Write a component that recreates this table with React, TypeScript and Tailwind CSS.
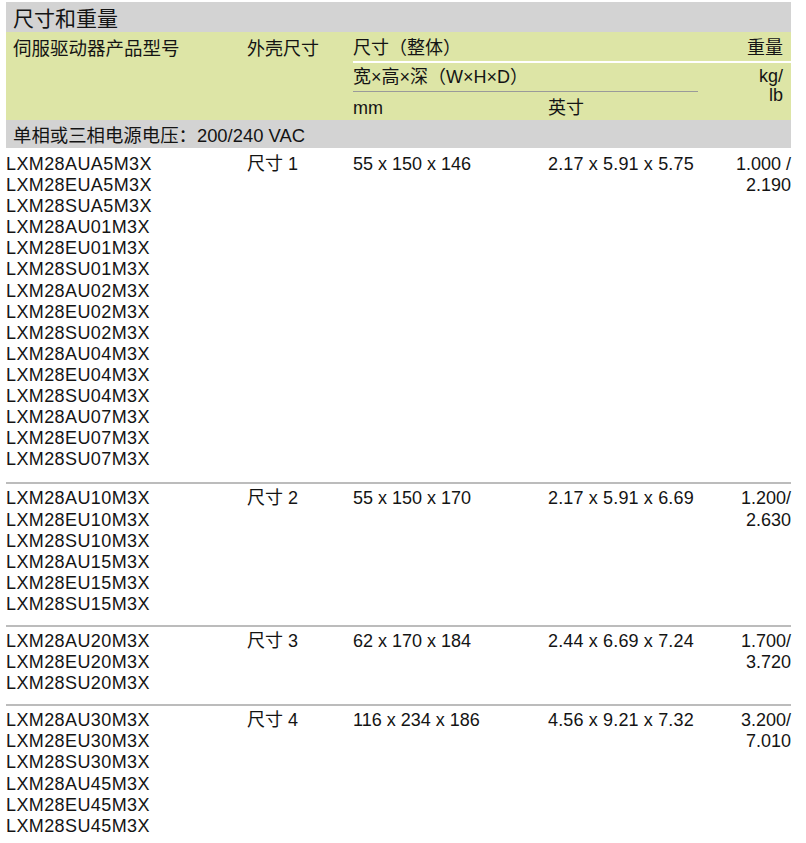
import React from "react";

type Group = {
  models: string[];
  size: string;
  mm: string;
  inch: string;
  w1: string;
  w2: string;
  pt: string;
  pb: string;
};

const groups: Group[] = [
  {
    models: [
      "LXM28AUA5M3X",
      "LXM28EUA5M3X",
      "LXM28SUA5M3X",
      "LXM28AU01M3X",
      "LXM28EU01M3X",
      "LXM28SU01M3X",
      "LXM28AU02M3X",
      "LXM28EU02M3X",
      "LXM28SU02M3X",
      "LXM28AU04M3X",
      "LXM28EU04M3X",
      "LXM28SU04M3X",
      "LXM28AU07M3X",
      "LXM28EU07M3X",
      "LXM28SU07M3X",
    ],
    size: "1",
    mm: "55 x 150 x 146",
    inch: "2.17 x 5.91 x 5.75",
    w1: "1.000 /",
    w2: "2.190",
    pt: "pt-[6px]",
    pb: "pb-[12px]",
  },
  {
    models: [
      "LXM28AU10M3X",
      "LXM28EU10M3X",
      "LXM28SU10M3X",
      "LXM28AU15M3X",
      "LXM28EU15M3X",
      "LXM28SU15M3X",
    ],
    size: "2",
    mm: "55 x 150 x 170",
    inch: "2.17 x 5.91 x 6.69",
    w1: "1.200/",
    w2: "2.630",
    pt: "pt-[4px]",
    pb: "pb-[10px]",
  },
  {
    models: ["LXM28AU20M3X", "LXM28EU20M3X", "LXM28SU20M3X"],
    size: "3",
    mm: "62 x 170 x 184",
    inch: "2.44 x 6.69 x 7.24",
    w1: "1.700/",
    w2: "3.720",
    pt: "pt-[4px]",
    pb: "pb-[10px]",
  },
  {
    models: [
      "LXM28AU30M3X",
      "LXM28EU30M3X",
      "LXM28SU30M3X",
      "LXM28AU45M3X",
      "LXM28EU45M3X",
      "LXM28SU45M3X",
    ],
    size: "4",
    mm: "116 x 234 x 186",
    inch: "4.56 x 9.21 x 7.32",
    w1: "3.200/",
    w2: "7.010",
    pt: "pt-[4px]",
    pb: "pb-[10px]",
  },
];

export default function App() {
  return (
    <div
      className="w-[806px] h-[843px] bg-white overflow-hidden text-[#141414]"
      style={{ fontFamily: '"Liberation Sans", "Noto Sans CJK SC", sans-serif' }}
    >
      <div className="ml-[6px] mt-[2px] w-[785px]">
        {/* Title bar */}
        <div className="h-[30px] bg-[#d3d3d3] flex items-center pl-[7px] pt-[4px] text-[21px] leading-[26px]">
          尺寸和重量
        </div>

        {/* Green header */}
        <div className="h-[88px] bg-[#dde5a6] grid grid-cols-[241px_106px_1fr] text-[18px] leading-[22px]">
          <div className="pl-[7px] h-[29px] flex items-center pt-[5px] text-[18.5px]">伺服驱动器产品型号</div>
          <div className="h-[29px] flex items-center pt-[5px]">外壳尺寸</div>
          <div className="flex flex-col">
            <div className="h-[31px] border-b-2 border-white flex items-center justify-between pr-[8px] pt-[3px]">
              <span>尺寸（整体）</span>
              <span>重量</span>
            </div>
            <div className="flex flex-1">
              <div className="w-[345px] flex flex-col">
                <div className="h-[29px] border-b border-[#9a9a9a] flex items-center">
                  宽×高×深（W×H×D）
                </div>
                <div className="h-[28px] flex items-center pt-[3px]">
                  <span className="w-[195px]">mm</span>
                  <span>英寸</span>
                </div>
              </div>
              <div className="flex-1 text-right pr-[8px] pt-[4px] leading-[19px]">
                <div>kg/</div>
                <div>lb</div>
              </div>
            </div>
          </div>
        </div>

        {/* Voltage bar */}
        <div className="h-[28px] bg-[#d3d3d3] flex items-center pl-[7px] pt-[4px] text-[18.4px] leading-[22px]">
          单相或三相电源电压：200/240 VAC
        </div>

        {/* Data groups */}
        {groups.map((g, i) => (
          <div
            key={i}
            className={`grid grid-cols-[241px_106px_195px_150px_1fr] text-[18px] leading-[21.1px] ${g.pt} ${g.pb} ${
              i < groups.length - 1 ? "border-b-2 border-[#bcbcbc]" : ""
            }`}
          >
            <div className="flex flex-col tracking-[0.4px]">
              {g.models.map((m) => (
                <div key={m}>{m}</div>
              ))}
            </div>
            <div>
              <span>尺寸</span>
              <span> {g.size}</span>
            </div>
            <div>{g.mm}</div>
            <div className="tracking-[0.15px]">{g.inch}</div>
            <div className="text-right">
              <div>{g.w1}</div>
              <div>{g.w2}</div>
            </div>
          </div>
        ))}
      </div>
    </div>
  );
}
